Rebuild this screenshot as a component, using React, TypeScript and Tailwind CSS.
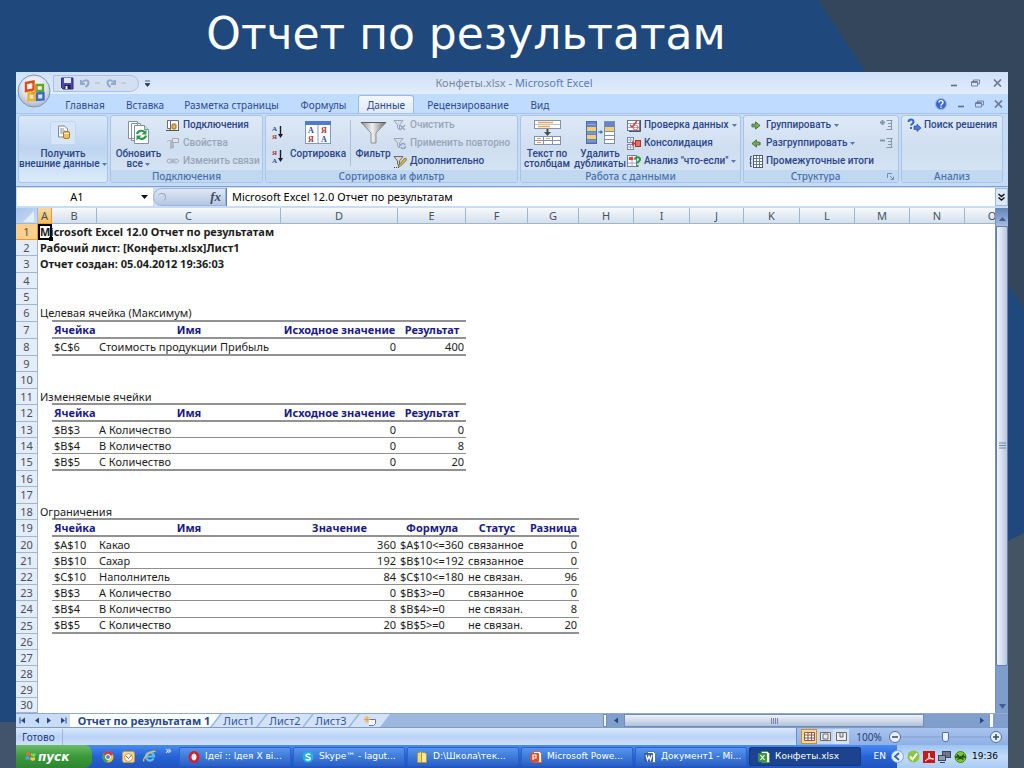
import React from "react";

type Children = { children?: React.ReactNode };

/* ---------- icons ---------- */

function Caret() {
  return (
    <svg width="5" height="3" viewBox="0 0 5 3" className="inline-block shrink-0 align-middle" aria-hidden="true">
      <path d="M0 0h5L2.500 3z" fill="#5877b0" />
    </svg>
  );
}

function OfficeLogo() {
  return (
    <svg width="34" height="34" viewBox="0 0 34 34" aria-hidden="true">
      <defs>
        <radialGradient id="orb" cx="50%" cy="35%" r="65%">
          <stop offset="0" stopColor="#ffffff" />
          <stop offset="0.6" stopColor="#dde3ec" />
          <stop offset="1" stopColor="#a9b6ca" />
        </radialGradient>
      </defs>
      <circle cx="17" cy="17" r="16" fill="url(#orb)" stroke="#8095b8" />
      <g fill="none" strokeWidth="2.400">
        <path d="M9 9 L16.500 7.500 V15.500 L9 17 Z" stroke="#dd4b12" />
        <path d="M19.500 11 H26 V17 H19.500 Z" stroke="#5fa72c" />
        <path d="M11.500 19.500 H17.500 V26 H11.500 Z" stroke="#f2b21b" />
        <path d="M20 19.500 L26.500 19 V25.500 L20 26 Z" stroke="#3a6cc4" />
      </g>
      <path d="M16.500 10 L19 12 V17 L16.500 19 L14 17" fill="none" stroke="#ef8a1c" strokeWidth="1.500" />
    </svg>
  );
}

function SaveIcon() {
  return (
    <svg width="13" height="13" viewBox="0 0 13 13" aria-hidden="true">
      <path d="M.5 1h11.500v11H2L.5 10.500z" fill="#4b46b4" stroke="#2d2a80" />
      <rect x="3" y="1" width="7" height="5" fill="#dfe6fb" />
      <rect x="3.500" y="8" width="6" height="4" fill="#1e1c55" />
      <rect x="4.500" y="9" width="2" height="3" fill="#fff" />
    </svg>
  );
}

function UndoIcon({ flip = false }: { flip?: boolean }) {
  return (
    <svg width="12" height="10" viewBox="0 0 12 10" className={flip ? "-scale-x-100" : ""} aria-hidden="true">
      <path d="M2 2v4h4M2.500 5.500C4 2 9 1 9.500 4.500 9.700 6.500 8 8 6.500 9" fill="none" stroke="#93a9cd" strokeWidth="2" />
    </svg>
  );
}

function Dash() {
  return (
    <svg width="5" height="2" viewBox="0 0 5 2" aria-hidden="true">
      <path d="M0 1h5" stroke="#a9bbd8" />
    </svg>
  );
}

function ExternalDataIcon() {
  return (
    <svg width="26" height="24" viewBox="0 0 26 24" aria-hidden="true">
      <rect x=".5" y=".5" width="25" height="23" rx="2" fill="#d7e6f6" stroke="#c3d6ee" />
      <path d="M8.500 5h6l3 3v8h-9z" fill="#fbfbfb" stroke="#7d8797" />
      <path d="M10 8h4M10 10h5M10 12h4" stroke="#7f8fa8" />
      <rect x="13.500" y="10.500" width="6" height="7" rx="1.500" fill="#f0c05a" stroke="#a87b27" />
      <path d="M14 12.500h5" stroke="#fff2c6" />
    </svg>
  );
}

function RefreshAllIcon() {
  return (
    <svg width="24" height="25" viewBox="0 0 24 25" aria-hidden="true">
      <path d="M1.500 1.500h9v17h-9zM4.500 3.500h9v17h-9z" fill="#fff" stroke="#84909f" />
      <path d="M7.500 5.500h10l4 4v14h-14z" fill="#fff" stroke="#84909f" />
      <path d="M17.500 5.500v4h4" fill="#d8dfea" stroke="#84909f" />
      <path d="M10 14c1-4 6-4 8-1.500M19 15.500c-1 4-6 4.500-8 1.500" fill="none" stroke="#2d9a45" strokeWidth="2.200" />
      <path d="M19.500 9.500v5h-5zM9.500 20.500v-5h5z" fill="#2d9a45" />
    </svg>
  );
}

function ConnectionsIcon() {
  return (
    <svg width="14" height="13" viewBox="0 0 14 13" aria-hidden="true">
      <path d="M1.500 1.500h7v8h-7z" fill="#fff" stroke="#7b6a5a" />
      <path d="M4.500 1.500h8v10h-8z" fill="#f4f6fa" stroke="#5e6d88" />
      <rect x="6" y="5" width="4" height="5" rx="1" fill="#eab54e" stroke="#9a6f22" />
      <path d="M0 11.500h13" stroke="#5d5248" />
    </svg>
  );
}

function PropertiesIcon() {
  return (
    <svg width="14" height="13" viewBox="0 0 14 13" aria-hidden="true">
      <path d="M6.500 1.500h6v4h-6zM1 5c1-2 4-2 6 0" fill="#dfe5ee" stroke="#a2aab6" />
      <path d="M5 4v8M7 6v5" stroke="#a2aab6" strokeWidth="1.500" />
    </svg>
  );
}

function LinkIcon() {
  return (
    <svg width="14" height="8" viewBox="0 0 14 8" aria-hidden="true">
      <ellipse cx="4" cy="4" rx="3" ry="2" fill="none" stroke="#a2aab6" />
      <ellipse cx="9.500" cy="4" rx="3" ry="2" fill="none" stroke="#a2aab6" />
      <path d="M4 4h6" stroke="#a2aab6" />
    </svg>
  );
}

function SortIcon({ desc = false }: { desc?: boolean }) {
  return (
    <svg width="13" height="16" viewBox="0 0 13 16" aria-hidden="true">
      <g fontFamily="Liberation Serif, serif" fontWeight="bold" fontSize="7">
        <text x="1" y="7" fill={desc ? "#a03a3a" : "#2c4aa0"}>{desc ? "Я" : "А"}</text>
        <text x="1" y="15" fill={desc ? "#2c4aa0" : "#a03a3a"}>{desc ? "А" : "Я"}</text>
      </g>
      <path d="M9.500 2v10" stroke="#1c1c28" strokeWidth="1.400" />
      <path d="M7 10h5l-2.500 4z" fill="#1c1c28" />
    </svg>
  );
}

function SortDialogIcon() {
  return (
    <svg width="26" height="23" viewBox="0 0 26 23" aria-hidden="true">
      <rect x=".5" y=".5" width="25" height="22" fill="#fff" stroke="#8199c9" />
      <rect x="0" y="0" width="26" height="4" fill="#4c7bd6" />
      <path d="M13 4v18" stroke="#8199c9" />
      <g fontFamily="Liberation Serif, serif" fontWeight="bold" fontSize="8">
        <text x="3" y="12" fill="#2c4aa0">А</text>
        <text x="3" y="21" fill="#a03a3a">Я</text>
        <text x="16" y="12" fill="#a03a3a">Я</text>
        <text x="16" y="21" fill="#2c4aa0">А</text>
      </g>
    </svg>
  );
}

function FunnelIcon() {
  return (
    <svg width="27" height="23" viewBox="0 0 27 23" aria-hidden="true">
      <defs>
        <linearGradient id="funnel" x1="0" x2="1">
          <stop offset="0" stopColor="#8b8b8b" />
          <stop offset="0.45" stopColor="#f0f0f0" />
          <stop offset="1" stopColor="#6d6d6d" />
        </linearGradient>
      </defs>
      <path d="M1 1.500h25L16 12v10h-5V12z" fill="url(#funnel)" stroke="#7d7d7d" strokeWidth=".8" />
      <path d="M1 1.500h25" stroke="#5e5e5e" />
    </svg>
  );
}

function SmallFunnel({ kind }: { kind: "clear" | "reapply" | "advanced" }) {
  const active = kind === "advanced";
  return (
    <svg width="14" height="13" viewBox="0 0 14 13" aria-hidden="true">
      <path d="M1 1.500h9L6.500 6v5L4.500 9V6z" fill={active ? "#d7d7d7" : "#d6dde8"} stroke={active ? "#6c6c6c" : "#9aa6ba"} />
      {kind === "clear" && <path d="M7 6l5 5M12 6l-5 5" stroke="#9aa6ba" strokeWidth="1.400" />}
      {kind === "reapply" && <path d="M7.500 9c0-3 4-3 4.500-1M12.500 9c0 3-4 3-4.500 1" fill="none" stroke="#8ea0c4" strokeWidth="1.500" />}
      {active && <path d="M5 11l7-8 2 1.500-7 7z" fill="#e8bf3c" stroke="#6b5520" strokeWidth=".8" />}
      {active && <path d="M1 12.500h6" stroke="#444" strokeDasharray="1 1" />}
    </svg>
  );
}

function TextToColumnsIcon() {
  return (
    <svg width="27" height="25" viewBox="0 0 27 25" aria-hidden="true">
      <rect x=".5" y=".5" width="26" height="8" fill="#fff" stroke="#8392ad" />
      <path d="M1 4.500h25" stroke="#b7c2d4" />
      <path d="M4 2.500h15M4 6.500h12" stroke="#f0a24a" strokeWidth="1.500" />
      <path d="M13.500 9v5" stroke="#4d4d4d" strokeWidth="2" />
      <path d="M10 12h7l-3.500 4z" fill="#4d4d4d" />
      <rect x=".5" y="16.500" width="26" height="8" fill="#fff" stroke="#8392ad" />
      <path d="M1 20.500h25M9.500 16v8M18.500 16v8" stroke="#8392ad" />
      <path d="M3 18.500h4M12 18.500h4M3 22.500h4" stroke="#f0a24a" />
    </svg>
  );
}

function RemoveDuplicatesIcon() {
  return (
    <svg width="29" height="23" viewBox="0 0 29 23" aria-hidden="true">
      <rect x=".5" y=".5" width="10" height="22" fill="#6584cc" stroke="#4f6cae" />
      <path d="M1 3.500h9M1 12h9M1 20h9" stroke="#8ea6dd" />
      <rect x="1" y="6" width="9" height="4" fill="#f3d068" />
      <rect x="1" y="14" width="9" height="4" fill="#f3d068" />
      <path d="M12 11h3" stroke="#3a5eb4" />
      <path d="M14.500 9l2.500 2-2.500 2z" fill="#3a5eb4" />
      <rect x="18.500" y=".5" width="10" height="22" fill="#fff" stroke="#7d8fb4" />
      <rect x="19" y="1" width="9" height="5" fill="#6584cc" />
      <rect x="19" y="6" width="9" height="4" fill="#f3d068" />
      <path d="M19 10.500h9M19 14.500h9M19 18.500h9" stroke="#7d8fb4" />
    </svg>
  );
}

function ValidationIcon() {
  return (
    <svg width="14" height="13" viewBox="0 0 14 13" aria-hidden="true">
      <rect x=".5" y="1.500" width="12" height="10" fill="#fff" stroke="#6a7a98" />
      <path d="M1 4.500h11M1 8.500h11" stroke="#9aa9c4" />
      <path d="M3 6l2 2 5-6" fill="none" stroke="#cf3b32" strokeWidth="1.400" />
      <circle cx="8.500" cy="8.500" r="2.500" fill="none" stroke="#d9605a" />
      <path d="M13.500 1v11.500H2" fill="none" stroke="#4d5563" />
    </svg>
  );
}

function ConsolidateIcon() {
  return (
    <svg width="14" height="13" viewBox="0 0 14 13" aria-hidden="true">
      <rect x=".5" y=".5" width="6" height="5" fill="#fff" stroke="#7183a8" />
      <rect x=".5" y="7.500" width="6" height="5" fill="#fff" stroke="#7183a8" />
      <path d="M.5 3h6M.5 10h6M3.500.5v5M3.500 7.500v5" stroke="#9aa9c4" />
      <rect x="8.500" y="3.500" width="5" height="6" fill="#e6705f" stroke="#a3372b" />
      <path d="M5 4l4 2.500L5 9z" fill="#cc3b31" />
    </svg>
  );
}

function WhatIfIcon() {
  return (
    <svg width="14" height="13" viewBox="0 0 14 13" aria-hidden="true">
      <rect x=".5" y=".5" width="9" height="11" fill="#fff" stroke="#7183a8" />
      <path d="M1 4h8M1 8h8M5 1v10" stroke="#9aa9c4" />
      <rect x="2" y="2" width="4" height="3" fill="#d94a3d" />
      <path d="M8 4.500c0-3 5-3 5 0 0 2-2.500 2-2.500 4M10.500 10v2" fill="none" stroke="#2c9b3f" strokeWidth="2" />
    </svg>
  );
}

function GroupArrow({ left = false }: { left?: boolean }) {
  return (
    <svg width="10" height="9" viewBox="0 0 11 10" className={left ? "-scale-x-100" : ""} aria-hidden="true">
      <path d="M1 3.500h4V1l5 4-5 4V6.500H1z" fill="#6fb045" stroke="#45664a" />
    </svg>
  );
}

function SubtotalIcon() {
  return (
    <svg width="14" height="13" viewBox="0 0 14 13" aria-hidden="true">
      <path d="M3 1.500H1.500v10H3M.5 4h2M.5 8h2" fill="none" stroke="#4d5c78" />
      <rect x="4.500" y=".5" width="9" height="12" fill="#fff" stroke="#4d5c78" />
      <path d="M5 3.500h8M5 6.500h8M5 9.500h8M7.500 1v11M10.500 1v11" stroke="#6b7a96" />
    </svg>
  );
}

function DetailIcon({ minus = false }: { minus?: boolean }) {
  return (
    <svg width="13" height="12" viewBox="0 0 13 12" aria-hidden="true">
      <path d="M0 3.500h5" stroke="#8796b0" strokeWidth="2" />
      {!minus && <path d="M2.500 1v5" stroke="#8796b0" strokeWidth="2" />}
      <path d="M6.500 1.500h6M8 4.500h4M8 7.500h4M6.500 10.500h6M11.500 1v10" stroke="#8796b0" />
    </svg>
  );
}

function SolverIcon() {
  return (
    <svg width="14" height="14" viewBox="0 0 14 14" aria-hidden="true">
      <path d="M1.500 4c0-3.500 5-3.500 5 0 0 2-2.500 2-2.500 3.500M4 9v2" fill="none" stroke="#3567c4" strokeWidth="2" />
      <path d="M7 8h3V6l4 4-4 3.500v-2H7z" fill="#4a7ad6" stroke="#2a4f9c" strokeWidth=".7" />
    </svg>
  );
}

function LauncherIcon() {
  return (
    <svg width="7" height="7" viewBox="0 0 7 7" aria-hidden="true">
      <path d="M.5 5V.5H5M3 3l3 3M6.500 3.500v3h-3" fill="none" stroke="#6f8dba" />
    </svg>
  );
}

function WindowButtons({ help = false }: { help?: boolean }) {
  return (
    <div className={`flex items-center ${help ? "gap-[10px] pr-[5px]" : "gap-[13px] pr-[6px]"}`}>
      {help && (
        <button aria-label="Справка">
          <svg width="12" height="12" viewBox="0 0 12 12">
            <circle cx="6" cy="6" r="5.500" fill="#3d69c6" stroke="#9db7e6" />
            <path d="M4 4.500c0-2.500 4-2.500 4 0 0 1.500-2 1.500-2 3M6 8.500v1.200" fill="none" stroke="#fff" strokeWidth="1.400" />
          </svg>
        </button>
      )}
      <button aria-label="Свернуть">
        <svg width="8" height="8" viewBox="0 0 8 8"><path d="M1 6.500h6" stroke="#5d6f8c" strokeWidth="1.600" /></svg>
      </button>
      <button aria-label="Восстановить">
        <svg width="9" height="8" viewBox="0 0 9 8">
          <path d="M2.500 2.500V1h6v4H7" fill="none" stroke="#7384a0" />
          <path d="M.5 3h6v4h-6z" fill="none" stroke="#7384a0" />
          <path d="M.5 3h6" stroke="#5d6f8c" strokeWidth="1.500" />
        </svg>
      </button>
      <button aria-label="Закрыть">
        <svg width="9" height="8" viewBox="0 0 9 8"><path d="M1 .5l7 7M8 .5l-7 7" stroke="#6b7b96" strokeWidth="1.700" /></svg>
      </button>
    </div>
  );
}

/* ---------- ribbon ---------- */

function Group({ title, width, launcher, children }: Children & { title: string; width: string; launcher?: boolean }) {
  return (
    <section className={`flex flex-col overflow-hidden rounded-[3px] border border-[#a9c4e4] bg-linear-to-b from-[#dee9f6] via-[#cfdef0] to-[#d8e6f6] ${width}`}>
      <div className="flex h-[54px]">{children}</div>
      <h3 className="flex h-3 items-center justify-center bg-[#c1d8f1] font-['Noto_Sans',sans-serif] text-[10px] leading-3 text-[#4a6fab]">
        <span className="flex-1 text-center">{title}</span>
        {launcher && <span className="pr-1"><LauncherIcon /></span>}
      </h3>
    </section>
  );
}

function BigLabel({ lines, caret }: { lines: string[]; caret?: boolean }) {
  return (
    <span className="text-center whitespace-nowrap">
      {lines.map((line, i) => (
        <React.Fragment key={line}>
          {i > 0 && <br />}
          {line}
        </React.Fragment>
      ))}
      {caret && <> <Caret /></>}
    </span>
  );
}

function Big({ icon, lines, caret, width }: { icon: React.ReactNode; lines: string[]; caret?: boolean; width: string }) {
  return (
    <button className={`flex flex-col items-center text-[10px] leading-[10px] text-[#2b4688] ${width}`}>
      <span className="flex h-[33px] items-center">{icon}</span>
      <BigLabel lines={lines} caret={caret} />
    </button>
  );
}

function Small({ icon, label, caret, disabled }: { icon: React.ReactNode; label: string; caret?: boolean; disabled?: boolean }) {
  return (
    <button
      disabled={disabled}
      className={`flex h-[18px] items-center gap-[3px] text-[10px] leading-3 whitespace-nowrap ${disabled ? "text-[#99a5b8]" : "text-[#2b4688]"}`}
    >
      <span className="flex w-[14px] justify-center">{icon}</span>
      {label}
      {caret && <Caret />}
    </button>
  );
}

function Ribbon() {
  return (
    <div className="flex h-[73px] items-start gap-[2px] border-t border-[#a5c2e8] bg-[#c5dbf6] px-[2px] pt-[1px] font-['Roboto',sans-serif] font-medium">
      <section className="w-[90px] rounded-[3px] border border-[#a9c4e4] bg-linear-to-b from-[#d9e8f8] via-[#bdd5f0] to-[#d9ecfb]">
        <button className="flex h-[66px] w-full flex-col items-center text-[10px] leading-[10px] text-[#2b4688]">
          <span className="flex h-[33px] items-center"><ExternalDataIcon /></span>
          <BigLabel lines={["Получить", "внешние данные"]} caret />
        </button>
      </section>
      <Group title="Подключения" width="w-[153px]">
        <Big icon={<RefreshAllIcon />} lines={["Обновить", "все"]} caret width="w-[55px]" />
        <div>
          <Small icon={<ConnectionsIcon />} label="Подключения" />
          <Small icon={<PropertiesIcon />} label="Свойства" disabled />
          <Small icon={<LinkIcon />} label="Изменить связи" disabled />
        </div>
      </Group>
      <Group title="Сортировка и фильтр" width="w-[253px]">
        <div className="flex w-[22px] flex-col items-center gap-2 pt-2">
          <button aria-label="Сортировка от А до Я"><SortIcon /></button>
          <button aria-label="Сортировка от Я до А"><SortIcon desc /></button>
        </div>
        <Big icon={<SortDialogIcon />} lines={["Сортировка"]} width="w-[60px]" />
        <div className="mx-[2px] my-1 w-px bg-[#aebfd8]" />
        <Big icon={<FunnelIcon />} lines={["Фильтр"]} width="w-[40px]" />
        <div>
          <Small icon={<SmallFunnel kind="clear" />} label="Очистить" disabled />
          <Small icon={<SmallFunnel kind="reapply" />} label="Применить повторно" disabled />
          <Small icon={<SmallFunnel kind="advanced" />} label="Дополнительно" />
        </div>
      </Group>
      <Group title="Работа с данными" width="w-[221px]">
        <Big icon={<TextToColumnsIcon />} lines={["Текст по", "столбцам"]} width="w-[52px]" />
        <Big icon={<RemoveDuplicatesIcon />} lines={["Удалить", "дубликаты"]} width="w-[54px]" />
        <div>
          <Small icon={<ValidationIcon />} label="Проверка данных" caret />
          <Small icon={<ConsolidateIcon />} label="Консолидация" />
          <Small icon={<WhatIfIcon />} label={'Анализ "что-если"'} caret />
        </div>
      </Group>
      <Group title="Структура" width="w-[156px]" launcher>
        <div className="flex-1 pl-[5px]">
          <Small icon={<GroupArrow />} label="Группировать" caret />
          <Small icon={<GroupArrow left />} label="Разгруппировать" caret />
          <Small icon={<SubtotalIcon />} label="Промежуточные итоги" />
        </div>
        <div className="flex flex-col gap-[6px] pt-[3px] pr-[5px]">
          <button aria-label="Отобразить детали"><DetailIcon /></button>
          <button aria-label="Скрыть детали"><DetailIcon minus /></button>
        </div>
      </Group>
      <Group title="Анализ" width="w-[102px]">
        <div className="pl-[5px]">
          <Small icon={<SolverIcon />} label="Поиск решения" />
        </div>
      </Group>
    </div>
  );
}

function TitleArea() {
  const tabs: { label: string; width: string }[] = [
    { label: "Главная", width: "w-[62px]" },
    { label: "Вставка", width: "w-[58px]" },
    { label: "Разметка страницы", width: "w-[115px]" },
    { label: "Формулы", width: "w-[69px]" },
    { label: "Данные", width: "w-[56px]" },
    { label: "Рецензирование", width: "w-[108px]" },
    { label: "Вид", width: "w-[36px]" },
  ];
  return (
    <header className="relative">
      <div className="absolute top-[2px] left-[1px]">
        <button aria-label="Кнопка Office"><OfficeLogo /></button>
      </div>
      <div className="flex h-[22px] items-center bg-linear-to-b from-[#cfe0f8] to-[#e2edfb] pl-[37px]">
        <div className="flex h-[17px] w-[86px] items-center gap-[5px] rounded-r-full border border-[#a9c0e2] bg-[#d3e0f2] pl-[7px]">
          <button aria-label="Сохранить"><SaveIcon /></button>
          <button aria-label="Отменить" className="flex items-center gap-1"><UndoIcon /><Dash /></button>
          <button aria-label="Вернуть" className="flex items-center gap-1"><UndoIcon flip /><Dash /></button>
        </div>
        <button aria-label="Настройка панели" className="pl-[6px]">
          <svg width="5" height="7" viewBox="0 0 5 7"><path d="M0 1h5M0 3.500h5L2.500 6.500z" fill="#2a3f6b" stroke="#2a3f6b" strokeWidth=".8" /></svg>
        </button>
        <h2 className="flex-1 pr-[72px] text-center text-[11px] text-[#5a7cb8]">
          <span className="text-[#7c8798]">Конфеты.xlsx</span> - Microsoft Excel
        </h2>
        <WindowButtons />
      </div>
      <div className="flex h-[19px] items-end bg-[#bfdbff] pl-[38px] text-[10px] text-[#2f4a8c]">
        <nav className="flex">
          {tabs.map((t) => (
            <button
              key={t.label}
              className={`h-[18px] rounded-t-[3px] border-x border-t text-center leading-4 whitespace-nowrap ${t.width} ${
                t.label === "Данные" ? "border-[#9db9e0] bg-linear-to-b from-[#f4f8fd] to-[#dfe9f6]" : "border-transparent"
              }`}
            >
              {t.label}
            </button>
          ))}
        </nav>
        <div className="ml-auto self-center"><WindowButtons help /></div>
      </div>
    </header>
  );
}

function FormulaBar() {
  return (
    <div className="flex h-[22px] items-start border-t border-[#7f9fc8] bg-[#c8dcf6] pt-px pl-px text-[11px] text-black">
      <div className="flex h-[18px] w-[136px] items-center bg-white pr-[5px]">
        <input aria-label="Имя" defaultValue="A1" className="h-4 w-0 flex-1 bg-transparent pr-1 text-center leading-4 outline-none" />
        <svg width="7" height="4" viewBox="0 0 7 4" aria-hidden="true"><path d="M0 0h7L3.500 4z" fill="#111" /></svg>
      </div>
      <div className="flex h-[18px] w-[73px] items-center justify-between rounded-l-full border border-[#9db5d8] bg-linear-to-b from-[#dfe8f4] to-[#b4c7e2] pr-1">
        <span className="m-1 size-2 rounded-full border-t border-r border-[#94a8c9]" />
        <button className="font-['Liberation_Serif',serif] text-[13px] leading-4 font-bold text-[#3c4b68] italic">fx</button>
      </div>
      <input
        aria-label="Строка формул"
        defaultValue="Microsoft Excel 12.0 Отчет по результатам"
        className="h-[18px] min-w-0 flex-1 border-l border-[#5f7fae] bg-white pb-[2px] pl-[5px] leading-4 outline-none"
      />
      <button aria-label="Развернуть" className="flex h-[18px] w-[13px] items-center justify-center border border-[#9cb6da] bg-[#dbe8f8]">
        <svg width="7" height="8" viewBox="0 0 7 8"><path d="M.5 1l3 2.500 3-2.500M.5 4.500l3 2.500 3-2.500" fill="none" stroke="#111" strokeWidth="1.400" /></svg>
      </button>
    </div>
  );
}

/* ---------- worksheet ---------- */

const columnWidths = [
  "w-[22px]", "w-[14px]", "w-[45px]", "w-[184px]", "w-[117px]", "w-[68px]", "w-[62px]", "w-[51px]",
  "w-[55px]", "w-[56px]", "w-[54px]", "w-[56px]", "w-[55px]", "w-[55px]", "w-[55px]", "w-[55px]",
];
const letters = ["A", "B", "C", "D", "E", "F", "G", "H", "I", "J", "K", "L", "M", "N", "O"];

type Row = {
  text?: string;
  bold?: boolean;
  head?: boolean;
  cells?: string[];
  line?: "thick" | "thin";
  span?: number;
  tall?: boolean;
  short?: boolean;
};

const rows: Row[] = [
  { text: "Microsoft Excel 12.0 Отчет по результатам", bold: true },
  { text: "Рабочий лист: [Конфеты.xlsx]Лист1", bold: true },
  { text: "Отчет создан: 05.04.2012 19:36:03", bold: true, tall: true },
  {},
  {},
  { text: "Целевая ячейка (Максимум)", line: "thick", span: 4, tall: true },
  { head: true, cells: ["Ячейка", "Имя", "Исходное значение", "Результат"], line: "thick", tall: true },
  { cells: ["$C$6", "Стоимость продукции Прибыль", "0", "400"], line: "thick", tall: true },
  {},
  { tall: true },
  { text: "Изменяемые ячейки", line: "thick", span: 4 },
  { head: true, cells: ["Ячейка", "Имя", "Исходное значение", "Результат"], line: "thick", tall: true },
  { cells: ["$B$3", "A Количество", "0", "0"], line: "thin" },
  { cells: ["$B$4", "B Количество", "0", "8"], line: "thin" },
  { cells: ["$B$5", "C Количество", "0", "20"], line: "thick", tall: true },
  {},
  { tall: true },
  { text: "Ограничения", line: "thick", span: 6 },
  { head: true, cells: ["Ячейка", "Имя", "Значение", "Формула", "Статус", "Разница"], line: "thick", tall: true },
  { cells: ["$A$10", "Какао", "360", "$A$10<=360", "связанное", "0"], line: "thin" },
  { cells: ["$B$10", "Сахар", "192", "$B$10<=192", "связанное", "0"], line: "thin" },
  { cells: ["$C$10", "Наполнитель", "84", "$C$10<=180", "не связан.", "96"], line: "thin" },
  { cells: ["$B$3", "A Количество", "0", "$B$3>=0", "связанное", "0"], line: "thin" },
  { cells: ["$B$4", "B Количество", "8", "$B$4>=0", "не связан.", "8"], line: "thin", tall: true },
  { cells: ["$B$5", "C Количество", "20", "$B$5>=0", "не связан.", "20"], line: "thick" },
  {},
  {},
  {},
  {},
  { short: true },
];

function cellAlign(value: string, head?: boolean) {
  if (head) return "text-center font-bold text-[#1a1a80]";
  return /^\d+$/.test(value) ? "text-right" : "text-left";
}

function lineClass(line?: "thick" | "thin") {
  if (line === "thick") return "border-b-2 border-[#929292]";
  if (line === "thin") return "border-b border-[#8f8f8f]";
  return "";
}

function rowHeight(row: Row) {
  if (row.short) return "h-[15px]";
  return row.tall ? "h-[17px]" : "h-4";
}

function Sheet() {
  return (
    <div className="min-w-0 flex-1 overflow-hidden bg-white text-[11px] leading-[14px] text-[#1c1c1c]">
      <table className="w-[1004px] min-w-full table-fixed border-separate border-spacing-0">
        <colgroup>
          {columnWidths.map((w, i) => <col key={i} className={w} />)}
        </colgroup>
        <thead>
          <tr className="h-4">
            <th className="border-r border-b border-[#9eb6ce] bg-linear-to-br from-[#a9c4e9] to-[#c9dcf4] p-0">
              <svg width="20" height="14" viewBox="0 0 20 14" className="block" aria-hidden="true"><path d="M18 2v11H7z" fill="#e4eefb" /></svg>
            </th>
            {letters.map((l) => (
              <th
                key={l}
                scope="col"
                className={`border-r border-b p-0 text-center font-normal text-[#45515f] ${
                  l === "A" ? "border-[#f29536] bg-linear-to-b from-[#f9d99f] to-[#f1c15f]" : "border-[#9eb6ce] bg-linear-to-b from-[#f6f9fc] to-[#d5dfec]"
                }`}
              >
                {l}
              </th>
            ))}
          </tr>
        </thead>
        <tbody>
          {rows.map((row, r) => {
            const count = row.cells ? row.cells.length : row.span ?? 0;
            return (
              <tr key={r} className={rowHeight(row)}>
                <th
                  scope="row"
                  className={`border-r border-b p-0 text-center font-normal text-[#45515f] ${
                    r === 0 ? "border-[#f29536] bg-[#fcd08a]" : "border-[#9eb6ce] bg-[#e4ecf7]"
                  }`}
                >
                  {r + 1}
                </th>
                <td className="relative p-0 pl-[2px]">
                  {r === 0 && (
                    <span className="absolute inset-0 border-2 border-black">
                      <span className="absolute -right-[3px] -bottom-[3px] size-1 bg-black" />
                    </span>
                  )}
                  {row.text && (
                    <span className={`absolute top-0 left-[2px] z-10 leading-4 whitespace-nowrap ${row.bold ? "font-bold" : ""}`}>{row.text}</span>
                  )}
                </td>
                {Array.from({ length: count }, (_, c) => {
                  const value = row.cells?.[c] ?? "";
                  return (
                    <td key={c} className={`overflow-visible px-[2px] py-0 whitespace-nowrap ${lineClass(row.line)} ${cellAlign(value, row.head)}`}>
                      {value}
                    </td>
                  );
                })}
                <td colSpan={14 - count} className="p-0" />
              </tr>
            );
          })}
        </tbody>
      </table>
    </div>
  );
}

function VerticalScroll() {
  return (
    <div className="flex w-[13px] flex-col items-center border-l border-[#7390bd] bg-[#7f9dca]">
      <div className="flex h-[18px] w-full items-center justify-center bg-linear-to-b from-[#6584b8] to-[#a5bde0] pt-1">
        <svg width="7" height="4" viewBox="0 0 7 4" aria-hidden="true"><path d="M0 4h7L3.500 0z" fill="#3f5f96" /></svg>
      </div>
      <div className="flex w-full flex-1 items-center justify-center rounded-[2px] border border-[#5f7fb5] bg-linear-to-r from-[#f1f5fb] to-[#b9c8de]">
        <svg width="7" height="8" viewBox="0 0 7 8" aria-hidden="true"><path d="M0 1h7M0 3.500h7M0 6h7" stroke="#7186a8" /></svg>
      </div>
      <div className="flex h-[47px] items-end pb-1">
        <svg width="7" height="5" viewBox="0 0 7 5" aria-hidden="true"><path d="M0 0h7L3.500 5z" fill="#3f5f96" /></svg>
      </div>
    </div>
  );
}

function NavArrow({ left, bar }: { left?: boolean; bar?: boolean }) {
  return (
    <svg width="7" height="7" viewBox="0 0 7 7" className={left ? "-scale-x-100" : ""} aria-hidden="true">
      <path d="M1 .5v6l4-3z" fill="#27457f" />
      {bar && <path d="M6 .5v6" stroke="#27457f" />}
    </svg>
  );
}

function SheetTabs() {
  const slant = "[clip-path:polygon(10px_0,100%_0,calc(100%-10px)_100%,0_100%)]";
  return (
    <div className="flex h-[14px] items-stretch border-t border-[#8eaad2] bg-[#9db8df] text-[11px] leading-3 text-[#34579a]">
      <div className="flex w-[54px] items-center justify-around bg-[#c9dcf6]">
        <button aria-label="Первый лист"><NavArrow left bar /></button>
        <button aria-label="Предыдущий лист"><NavArrow left /></button>
        <button aria-label="Следующий лист"><NavArrow /></button>
        <button aria-label="Последний лист"><NavArrow bar /></button>
      </div>
      <button className="w-[150px] bg-white pr-[2px] text-center font-bold whitespace-nowrap text-[#27498c] [clip-path:polygon(0_0,100%_0,calc(100%-10px)_100%,0_100%)]">
        Отчет по результатам 1
      </button>
      {["Лист1", "Лист2", "Лист3"].map((name) => (
        <button key={name} className={`-ml-2 w-[54px] bg-[#d3e2f7] text-center ${slant}`}>{name}</button>
      ))}
      <button aria-label="Вставить лист" className={`-ml-2 flex w-[40px] items-center justify-center bg-[#d3e2f7] ${slant}`}>
        <svg width="13" height="10" viewBox="0 0 13 10">
          <path d="M5 3.500h6.500v4l-2 2H5" fill="#fff" stroke="#5d77a8" />
          <path d="M3 0v7M0 3.500h6M1 1.500l4 4M5 1.500l-4 4" stroke="#f0a030" />
        </svg>
      </button>
      <div className="ml-auto flex w-[405px] items-stretch bg-[#809fcc]">
        <div className="w-1 border border-[#6f8cba] bg-white" />
        <span className="flex w-[17px] items-center justify-center"><NavArrow left /></span>
        <div className="flex flex-1 items-center justify-center border border-[#6f8cba] bg-linear-to-b from-[#eef3fa] to-[#b3c2d9]">
          <svg width="7" height="6" viewBox="0 0 7 6" aria-hidden="true"><path d="M.5 0v6M2.500 0v6M4.500 0v6M6.500 0v6" stroke="#7186a8" /></svg>
        </div>
        <span className="flex w-[66px] items-center justify-end pr-1"><NavArrow /></span>
        <div className="w-[3px] bg-white" />
        <div className="w-[15px]" />
      </div>
    </div>
  );
}

function StatusBar() {
  return (
    <div className="flex h-[18px] items-center border-t border-[#7f9bc9] bg-linear-to-b from-[#dbe9fc] via-[#b9d2f5] to-[#cfe1fa] text-[10px] leading-4 text-[#24407c]">
      <span className="w-[47px] border-r border-[#9bb5dd] pl-[6px]">Готово</span>
      <div className="ml-auto flex h-full items-center border-l border-[#6f8fc4] bg-linear-to-b from-[#a9c3ee] to-[#8fb0e4] pl-[4px]">
        <button aria-label="Обычный" className="flex h-[15px] w-4 items-center justify-center border border-[#c98f36] bg-[#fbd68c]">
          <svg width="11" height="9" viewBox="0 0 11 9"><path d="M.5.500h10v8H.5zM.5 3h10M.5 6h10M4 .5v8M7.500.500v8" fill="#fff" stroke="#8a5b4c" /></svg>
        </button>
        <button aria-label="Разметка" className="flex h-[15px] w-4 items-center justify-center bg-[#c4d6f1]">
          <svg width="11" height="9" viewBox="0 0 11 9"><path d="M.5.500h10v8H.5zM3 2h5v5H3z" fill="#eee" stroke="#6a6a6a" /></svg>
        </button>
        <button aria-label="Страничный" className="flex h-[15px] w-4 items-center justify-center bg-[#d4e2f6]">
          <svg width="11" height="9" viewBox="0 0 11 9"><path d="M.5.500h10v8H.5zM4 0v5h3V0" fill="#eee" stroke="#6a6a6a" /></svg>
        </button>
        <button className="w-10 text-center">100%</button>
        <button aria-label="Уменьшить" className="flex size-3 items-center justify-center rounded-full border border-[#56719f] bg-[#e8effa]">
          <svg width="6" height="6" viewBox="0 0 6 6"><path d="M0 3h6" stroke="#33496f" strokeWidth="1.500" /></svg>
        </button>
        <input
          type="range"
          aria-label="Масштаб"
          defaultValue={50}
          className="h-3 w-[89px] appearance-none bg-linear-to-b from-transparent from-45% via-[#4f6ea6] via-50% to-transparent to-55% [&::-webkit-slider-thumb]:h-[10px] [&::-webkit-slider-thumb]:w-[7px] [&::-webkit-slider-thumb]:appearance-none [&::-webkit-slider-thumb]:rounded-b-[3px] [&::-webkit-slider-thumb]:border [&::-webkit-slider-thumb]:border-[#56719f] [&::-webkit-slider-thumb]:bg-[#eef3fb]"
        />
        <button aria-label="Увеличить" className="mr-[6px] flex size-3 items-center justify-center rounded-full border border-[#56719f] bg-[#e8effa]">
          <svg width="6" height="6" viewBox="0 0 6 6"><path d="M0 3h6M3 0v6" stroke="#33496f" strokeWidth="1.500" /></svg>
        </button>
      </div>
    </div>
  );
}

/* ---------- taskbar ---------- */

function ChromeIcon() {
  return (
    <svg width="12" height="12" viewBox="0 0 12 12" aria-hidden="true">
      <circle cx="6" cy="6" r="5.500" fill="#f4c430" />
      <path d="M6 6L1.200 3.200A5.500 5.500 0 0 1 11 3.500z" fill="#db3b2e" />
      <path d="M6 6L1.200 3.200A5.500 5.500 0 0 0 5.500 11.500z" fill="#3ba14c" />
      <circle cx="6" cy="6" r="2.500" fill="#4a86e0" stroke="#fff" />
    </svg>
  );
}

function OutlookIcon() {
  return (
    <svg width="13" height="12" viewBox="0 0 13 12" aria-hidden="true">
      <rect x=".5" y=".5" width="12" height="11" rx="2" fill="#f3dc9a" stroke="#c99a3c" />
      <circle cx="6.500" cy="6.500" r="4" fill="#fff" stroke="#dd8c2a" />
      <path d="M4 5l2.500 2.500L9.500 4" fill="none" stroke="#c94f2a" />
    </svg>
  );
}

function ExplorerIcon() {
  return (
    <svg width="14" height="13" viewBox="0 0 14 13" aria-hidden="true">
      <path d="M10.500 8.500A4 4 0 1 1 11 6.500H4" fill="none" stroke="#5cc0f5" strokeWidth="2.200" />
      <path d="M1 11.500C-1 8 8 0 12.500 1.500" fill="none" stroke="#f0c040" strokeWidth="1.300" />
    </svg>
  );
}

function OperaIcon() {
  return (
    <svg width="12" height="12" viewBox="0 0 12 12" aria-hidden="true">
      <ellipse cx="6" cy="6" rx="4" ry="4.500" fill="#fff" stroke="#d8202a" strokeWidth="3" />
      <ellipse cx="6" cy="6" rx="1.800" ry="3.600" fill="#eef3ff" />
    </svg>
  );
}

function SkypeIcon() {
  return (
    <svg width="12" height="12" viewBox="0 0 12 12" aria-hidden="true">
      <circle cx="6" cy="6" r="5.500" fill="#1fb4ee" />
      <path d="M8.200 4C7 2.500 4 3 4 4.500s4.200 1.200 4.200 3S5 9.500 3.800 8" fill="none" stroke="#fff" strokeWidth="1.500" />
    </svg>
  );
}

function FolderIcon() {
  return (
    <svg width="12" height="12" viewBox="0 0 12 12" aria-hidden="true">
      <path d="M1.500 2l4-1.500v11H1.500z" fill="#f5d76a" stroke="#b78e2c" strokeWidth=".8" />
      <path d="M5.500 1.500h3l2 1.500v8.500h-5z" fill="#fbe89a" stroke="#b78e2c" strokeWidth=".8" />
    </svg>
  );
}

function DocIcon({ kind }: { kind: "ppt" | "word" | "excel" }) {
  const color = kind === "ppt" ? "#d8502c" : kind === "word" ? "#3a5fae" : "#3d9440";
  const mark = kind === "ppt" ? "M3 9V4h3v3H3" : kind === "word" ? "M2 4l1.500 5L5 5l1.500 4L8 4" : "M2.500 4l4 5M6.500 4l-4 5";
  return (
    <svg width="12" height="12" viewBox="0 0 12 12" aria-hidden="true">
      <path d="M3.500.500h6l2 2v9h-8z" fill="#fff" stroke={color} strokeWidth=".8" />
      <rect x="0" y="2" width="9" height="9" rx="1" fill={color} />
      <path d={mark} fill="none" stroke="#fff" strokeWidth="1.200" />
    </svg>
  );
}

function Taskbar() {
  const tasks: { icon: React.ReactNode; label: string; active?: boolean }[] = [
    { icon: <OperaIcon />, label: "Ідеї :: Ідея X ві..." },
    { icon: <SkypeIcon />, label: "Skype™ - lagut..." },
    { icon: <FolderIcon />, label: "D:\\Школа\\тек..." },
    { icon: <DocIcon kind="ppt" />, label: "Microsoft Powe..." },
    { icon: <DocIcon kind="word" />, label: "Документ1 - Mi..." },
    { icon: <DocIcon kind="excel" />, label: "Конфеты.xlsx", active: true },
  ];
  return (
    <footer className="flex h-[23px] items-stretch bg-linear-to-b from-[#4a8cf0] via-[#2762d6] to-[#2154bd] font-['DejaVu_Sans',sans-serif] text-[9px] text-white">
      <button className="flex w-[76px] items-center gap-[2px] rounded-r-[8px] bg-linear-to-b from-[#6dbb66] via-[#3a9a3b] to-[#2f8631] pl-[9px] text-[12px] font-bold italic">
        <svg width="11" height="11" viewBox="0 0 11 11" aria-hidden="true">
          <path d="M1 2c1.500-1 3-1 4 0v3C4 4 2.500 4 1 5z" fill="#f0663a" />
          <path d="M6 2c1.500 1 3 1 4.500 0v3C9 6 7.500 6 6 5z" fill="#8ed04e" />
          <path d="M.5 6c1.500-1 3-1 4 0v3c-1-1-2.500-1-4 0z" fill="#5b9bf0" />
          <path d="M5.500 6c1.500 1 3 1 4.500 0v3c-1.500 1-3 1-4.500 0z" fill="#f7cf45" />
        </svg>
        пуск
      </button>
      <div className="flex w-[87px] items-center gap-2 pl-[10px]">
        <a href="#chrome" aria-label="Chrome"><ChromeIcon /></a>
        <a href="#outlook" aria-label="Outlook"><OutlookIcon /></a>
        <a href="#explorer" aria-label="Internet Explorer"><ExplorerIcon /></a>
        <span className="self-start text-[11px] leading-3">»</span>
      </div>
      <div className="flex min-w-0 items-stretch gap-[2px] py-[2px]">
        {tasks.map((t) => (
          <button
            key={t.label}
            className={`flex w-[112px] items-center gap-[5px] rounded-[2px] border pl-2 whitespace-nowrap ${
              t.active ? "border-[#153a85] bg-[#1c438f]" : "border-[#2d61c8] bg-linear-to-b from-[#5595ec] to-[#2a62c8]"
            }`}
          >
            {t.icon}
            {t.label}
          </button>
        ))}
      </div>
      <span className="ml-auto flex items-center px-[11px]">EN</span>
      <div className="flex w-[111px] items-center gap-[3px] bg-linear-to-b from-[#9cc4f2] via-[#c5dcf8] to-[#a9cbf4] pr-[10px] text-black">
        <button aria-label="Показать значки" className="-ml-[6px]">
          <svg width="13" height="13" viewBox="0 0 13 13"><circle cx="6.500" cy="6.500" r="6" fill="#e6f0fc" stroke="#7ea3dc" /><path d="M8 3L4 6.500 8 10" fill="none" stroke="#3a66b8" strokeWidth="2" /></svg>
        </button>
        <svg width="13" height="13" viewBox="0 0 13 13" aria-hidden="true"><circle cx="6.500" cy="6.500" r="6" fill="#8cc63f" /><path d="M3 6.500l2.500 3L10 3.500" fill="none" stroke="#fff" strokeWidth="2" /></svg>
        <svg width="12" height="12" viewBox="0 0 12 12" aria-hidden="true"><rect width="12" height="12" fill="#c61a1a" /><path d="M2 10c4-2 5-6 4-8-1 3 1 6 4.500 6C7 7 4 8 2 10z" fill="none" stroke="#fff" /></svg>
        <svg width="13" height="12" viewBox="0 0 13 12" aria-hidden="true"><rect x="4.500" y=".5" width="8" height="6" fill="#6b7688" stroke="#3f4756" /><rect x=".5" y="4.500" width="7" height="5" fill="#8d99ac" stroke="#3f4756" /><path d="M2 11.500h5" stroke="#3f4756" /></svg>
        <svg width="13" height="12" viewBox="0 0 13 12" aria-hidden="true"><circle cx="6.500" cy="6" r="5.500" fill="#7cc830" stroke="#3f8a22" /><path d="M1 6h11M3 3.500l2 2M10 3.500l-2 2M3.500 8.500c2-1.500 4-1.500 6 0" stroke="#1f4a18" fill="none" strokeWidth="1.300" /></svg>
        <time className="ml-auto">19:36</time>
      </div>
    </footer>
  );
}

export default function App() {
  return (
    <div className="relative flex min-h-screen flex-col overflow-hidden bg-[#1f497d] font-['Noto_Sans',sans-serif]">
      <svg className="absolute inset-y-0 right-0 h-full w-[206px]" viewBox="0 0 206 768" preserveAspectRatio="none" aria-hidden="true">
        <path d="M0 0H206V309z" fill="#34465c" />
        <path d="M190 541L206 533V768H190z" fill="#455462" />
      </svg>
      <div className="absolute bottom-0 left-0 h-[46px] w-4 bg-[#41546b]" />
      <h1 className="relative h-[72px] pr-[92px] text-center font-['DejaVu_Sans',sans-serif] text-[44px] leading-[68px] text-white">
        Отчет по результатам
      </h1>
      <main className="relative mx-4 flex flex-1 flex-col bg-[#c5dbf6]">
        <TitleArea />
        <Ribbon />
        <FormulaBar />
        <div className="flex flex-1 items-stretch">
          <Sheet />
          <VerticalScroll />
        </div>
        <SheetTabs />
        <StatusBar />
        <Taskbar />
      </main>
    </div>
  );
}
